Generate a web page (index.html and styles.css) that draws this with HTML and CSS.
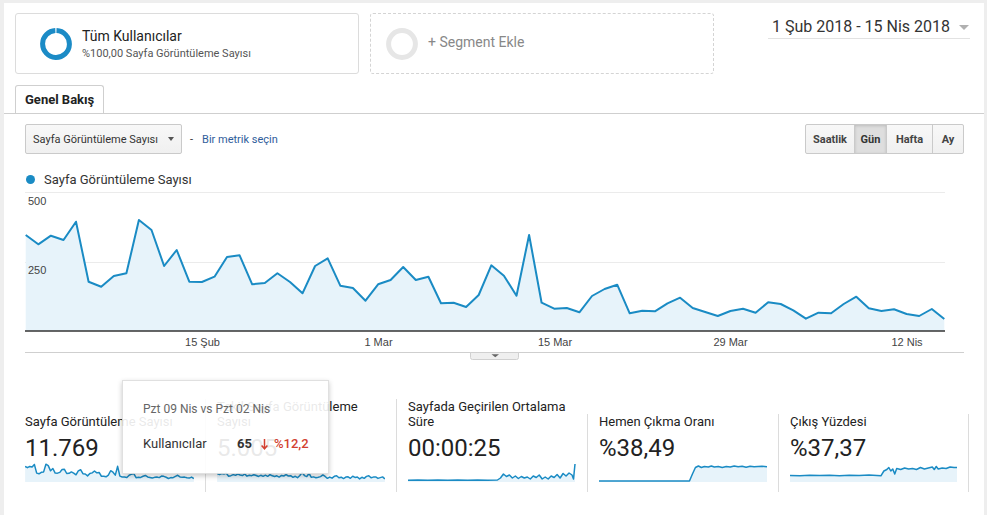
FILE: index.html
```html
<!DOCTYPE html>
<html lang="tr">
<head>
<meta charset="utf-8">
<title>Genel Bakış</title>
<link rel="stylesheet" href="styles.css">
</head>
<body>
<div class="panel">
  <div class="segments">
    <div class="seg-card">
      <svg class="ring" width="32" height="32" viewBox="0 0 32 32"><circle cx="16" cy="16" r="13.4" fill="none" stroke="#1b8bc6" stroke-width="5" stroke-dasharray="82.5 1.7" transform="rotate(-88 16 16)"/></svg>
      <div class="seg-text">
        <div class="seg-title">Tüm Kullanıcılar</div>
        <div class="seg-sub">%100,00 Sayfa Görüntüleme Sayısı</div>
      </div>
    </div>
    <div class="seg-card seg-add">
      <svg class="ring" width="32" height="32" viewBox="0 0 32 32"><circle cx="16" cy="16" r="13.4" fill="none" stroke="#e6e6e6" stroke-width="5"/></svg>
      <div class="seg-add-text">+ Segment Ekle</div>
    </div>
    <div class="date-range">
      <span>1 Şub 2018 - 15 Nis 2018</span>
      <span class="date-caret"></span>
    </div>
  </div>

  <div class="tabs">
    <div class="tab">Genel Bakış</div>
  </div>

  <div class="controls">
    <div class="metric-select">
      <span>Sayfa Görüntüleme Sayısı</span>
      <span class="select-caret"></span>
    </div>
    <span class="dash">-</span>
    <a class="link">Bir metrik seçin</a>
    <div class="btn-group">
      <div class="btn">Saatlik</div>
      <div class="btn active">Gün</div>
      <div class="btn">Hafta</div>
      <div class="btn">Ay</div>
    </div>
  </div>

  <div class="legend"><span class="legend-dot"></span><span>Sayfa Görüntüleme Sayısı</span></div>

  <svg class="chart" width="939" height="173" viewBox="25 187 939 173">
    <line x1="25" y1="192.5" x2="945" y2="192.5" stroke="#ebebeb" stroke-width="1"/>
    <line x1="25" y1="262.5" x2="945" y2="262.5" stroke="#ebebeb" stroke-width="1"/>
    <polygon fill="#e7f3fa" points="25.7,235 38.3,244.3 50.9,235.7 63.5,240 76,221.7 88.6,281.7 101.2,286.7 113.8,276 126.4,273.3 138.9,220 151.5,230 164.1,266 176.7,250 189.3,281.7 201.9,282 214.5,276.7 227,257 239.6,255.3 252.2,284.3 264.8,283 277.4,273.3 290,282 302.5,293.3 315.1,266 327.7,258.3 340.3,285.7 352.9,288 365.5,300.7 378.1,284.3 390.6,280 403.2,267 415.8,280 428.4,276.7 441,303.3 453.6,302.7 466.1,307 478.7,295 491.3,265.3 503.9,275.7 516.5,295.7 529.1,235 541.6,302.7 554.2,308.7 566.8,308 579.4,312.3 592,296 604.6,289 617.2,284.7 629.7,313.3 642.3,310.7 654.9,311.3 667.5,303.3 680.1,297.7 692.7,308 705.2,312 717.8,316 730.4,311 743,308.7 755.6,312.7 768.2,302.3 780.7,304 793.3,310.3 805.9,318.7 818.5,312.7 831.1,313.3 843.7,304 856.3,296.7 868.8,308.3 881.4,311 894,309.3 906.6,314 919.2,316 931.8,309 944.3,319 944.3,331 25.7,331"/>
    <polyline fill="none" stroke="#1a8bc4" stroke-width="2" stroke-linejoin="round" points="25.7,235 38.3,244.3 50.9,235.7 63.5,240 76,221.7 88.6,281.7 101.2,286.7 113.8,276 126.4,273.3 138.9,220 151.5,230 164.1,266 176.7,250 189.3,281.7 201.9,282 214.5,276.7 227,257 239.6,255.3 252.2,284.3 264.8,283 277.4,273.3 290,282 302.5,293.3 315.1,266 327.7,258.3 340.3,285.7 352.9,288 365.5,300.7 378.1,284.3 390.6,280 403.2,267 415.8,280 428.4,276.7 441,303.3 453.6,302.7 466.1,307 478.7,295 491.3,265.3 503.9,275.7 516.5,295.7 529.1,235 541.6,302.7 554.2,308.7 566.8,308 579.4,312.3 592,296 604.6,289 617.2,284.7 629.7,313.3 642.3,310.7 654.9,311.3 667.5,303.3 680.1,297.7 692.7,308 705.2,312 717.8,316 730.4,311 743,308.7 755.6,312.7 768.2,302.3 780.7,304 793.3,310.3 805.9,318.7 818.5,312.7 831.1,313.3 843.7,304 856.3,296.7 868.8,308.3 881.4,311 894,309.3 906.6,314 919.2,316 931.8,309 944.3,319"/>
    <line x1="25" y1="331" x2="945" y2="331" stroke="#333" stroke-width="1.3"/>
    <text class="axis" x="28" y="205">500</text>
    <text class="axis" x="28" y="274">250</text>
    <text class="axis" x="202.5" y="346" text-anchor="middle">15 Şub</text>
    <text class="axis" x="378.5" y="346" text-anchor="middle">1 Mar</text>
    <text class="axis" x="555" y="346" text-anchor="middle">15 Mar</text>
    <text class="axis" x="730.5" y="346" text-anchor="middle">29 Mar</text>
    <text class="axis" x="907" y="346" text-anchor="middle">12 Nis</text>
    <line x1="25" y1="352.5" x2="964" y2="352.5" stroke="#cfcfcf" stroke-width="1"/>
    <path d="M470.5 352.5 H518.5 V357.5 Q518.5 359.5 516.5 359.5 H472.5 Q470.5 359.5 470.5 357.5 Z" fill="#efefef" stroke="#d0d0d0" stroke-width="1"/>
    <polygon points="491.5,354.3 499,354.3 495.25,357.2" fill="#666"/>
  </svg>

  <div class="metrics">
    <div class="metric">
      <div class="metric-title">Sayfa Görüntüleme Sayısı</div>
      <div class="metric-value">11.769</div>
      <svg class="spark" viewBox="25 205 920 138" preserveAspectRatio="none">
        <polygon fill="#e7f3fa" points="25.7,235 38.3,244.3 50.9,235.7 63.5,240 76,221.7 88.6,281.7 101.2,286.7 113.8,276 126.4,273.3 138.9,220 151.5,230 164.1,266 176.7,250 189.3,281.7 201.9,282 214.5,276.7 227,257 239.6,255.3 252.2,284.3 264.8,283 277.4,273.3 290,282 302.5,293.3 315.1,266 327.7,258.3 340.3,285.7 352.9,288 365.5,300.7 378.1,284.3 390.6,280 403.2,267 415.8,280 428.4,276.7 441,303.3 453.6,302.7 466.1,307 478.7,295 491.3,265.3 503.9,275.7 516.5,295.7 529.1,235 541.6,302.7 554.2,308.7 566.8,308 579.4,312.3 592,296 604.6,289 617.2,284.7 629.7,313.3 642.3,310.7 654.9,311.3 667.5,303.3 680.1,297.7 692.7,308 705.2,312 717.8,316 730.4,311 743,308.7 755.6,312.7 768.2,302.3 780.7,304 793.3,310.3 805.9,318.7 818.5,312.7 831.1,313.3 843.7,304 856.3,296.7 868.8,308.3 881.4,311 894,309.3 906.6,314 919.2,316 931.8,309 944.3,319 944.3,343 25.7,343"/>
        <polyline class="spark-line" points="25.7,235 38.3,244.3 50.9,235.7 63.5,240 76,221.7 88.6,281.7 101.2,286.7 113.8,276 126.4,273.3 138.9,220 151.5,230 164.1,266 176.7,250 189.3,281.7 201.9,282 214.5,276.7 227,257 239.6,255.3 252.2,284.3 264.8,283 277.4,273.3 290,282 302.5,293.3 315.1,266 327.7,258.3 340.3,285.7 352.9,288 365.5,300.7 378.1,284.3 390.6,280 403.2,267 415.8,280 428.4,276.7 441,303.3 453.6,302.7 466.1,307 478.7,295 491.3,265.3 503.9,275.7 516.5,295.7 529.1,235 541.6,302.7 554.2,308.7 566.8,308 579.4,312.3 592,296 604.6,289 617.2,284.7 629.7,313.3 642.3,310.7 654.9,311.3 667.5,303.3 680.1,297.7 692.7,308 705.2,312 717.8,316 730.4,311 743,308.7 755.6,312.7 768.2,302.3 780.7,304 793.3,310.3 805.9,318.7 818.5,312.7 831.1,313.3 843.7,304 856.3,296.7 868.8,308.3 881.4,311 894,309.3 906.6,314 919.2,316 931.8,309 944.3,319"/>
      </svg>
    </div>
    <div class="metric">
      <div class="metric-title">Tekil Sayfa Görüntüleme Sayısı</div>
      <div class="metric-value">5.005</div>
      <svg class="spark" viewBox="25 150 920 200" preserveAspectRatio="none">
        <polygon fill="#e7f3fa" points="25.7,235 38.3,244.3 50.9,235.7 63.5,240 76,221.7 88.6,281.7 101.2,286.7 113.8,276 126.4,273.3 138.9,220 151.5,230 164.1,266 176.7,250 189.3,281.7 201.9,282 214.5,276.7 227,257 239.6,255.3 252.2,284.3 264.8,283 277.4,273.3 290,282 302.5,293.3 315.1,266 327.7,258.3 340.3,285.7 352.9,288 365.5,300.7 378.1,284.3 390.6,280 403.2,267 415.8,280 428.4,276.7 441,303.3 453.6,302.7 466.1,307 478.7,295 491.3,265.3 503.9,275.7 516.5,295.7 529.1,235 541.6,302.7 554.2,308.7 566.8,308 579.4,312.3 592,296 604.6,289 617.2,284.7 629.7,313.3 642.3,310.7 654.9,311.3 667.5,303.3 680.1,297.7 692.7,308 705.2,312 717.8,316 730.4,311 743,308.7 755.6,312.7 768.2,302.3 780.7,304 793.3,310.3 805.9,318.7 818.5,312.7 831.1,313.3 843.7,304 856.3,296.7 868.8,308.3 881.4,311 894,309.3 906.6,314 919.2,316 931.8,309 944.3,319 944.3,350 25.7,350"/>
        <polyline class="spark-line" points="25.7,265 38.3,274.3 50.9,265.7 63.5,270 76,261.7 88.6,291.7 101.2,286.7 113.8,276 126.4,283.3 138.9,270 151.5,280 164.1,286 176.7,270 189.3,291.7 201.9,282 214.5,286.7 227,277 239.6,285.3 252.2,294.3 264.8,283 277.4,293.3 290,282 302.5,293.3 315.1,276 327.7,288.3 340.3,295.7 352.9,288 365.5,300.7 378.1,284.3 390.6,290 403.2,277 415.8,290 428.4,286.7 441,303.3 453.6,292.7 466.1,307 478.7,285 491.3,255.3 503.9,285.7 516.5,295.7 529.1,265 541.6,302.7 554.2,298.7 566.8,308 579.4,302.3 592,296 604.6,279 617.2,294.7 629.7,313.3 642.3,300.7 654.9,311.3 667.5,293.3 680.1,287.7 692.7,308 705.2,302 717.8,316 730.4,301 743,298.7 755.6,312.7 768.2,292.3 780.7,304 793.3,300.3 805.9,318.7 818.5,302.7 831.1,313.3 843.7,294 856.3,286.7 868.8,308.3 881.4,301 894,299.3 906.6,314 919.2,306 931.8,299 944.3,319"/>
      </svg>
    </div>
    <div class="metric">
      <div class="metric-title">Sayfada Geçirilen Ortalama Süre</div>
      <div class="metric-value">00:00:25</div>
      <svg class="spark" viewBox="0 0 169 20" preserveAspectRatio="none">
        <polygon fill="#e7f3fa" points="0,18.2 10,18 20,18.3 30,18 40,18.2 50,18 60,18.3 70,18.1 80,18.2 90,18 93,16 96,12 99,14.5 102,13 105,16 108,14 111,16.5 114,14.5 117,16 120,15 123,17 126,14 129,15.5 132,13 135,17 138,15 141,17 144,14 147,15.5 150,12.5 153,16 156,11.5 159,14 162,11 165,13 166.5,17 168,2 168,20 0,20"/>
        <polyline class="spark-line" points="0,18.2 10,18 20,18.3 30,18 40,18.2 50,18 60,18.3 70,18.1 80,18.2 90,18 93,16 96,12 99,14.5 102,13 105,16 108,14 111,16.5 114,14.5 117,16 120,15 123,17 126,14 129,15.5 132,13 135,17 138,15 141,17 144,14 147,15.5 150,12.5 153,16 156,11.5 159,14 162,11 165,13 166.5,17 168,2"/>
      </svg>
    </div>
    <div class="metric">
      <div class="metric-title">Hemen Çıkma Oranı</div>
      <div class="metric-value">%38,49</div>
      <svg class="spark" viewBox="0 0 169 20" preserveAspectRatio="none">
        <polygon fill="#e7f3fa" points="0,19 30,19 60,19 91,19 94,12 97,5.5 100,4 103,5.5 106,4.5 110,5 113,4 116,5 120,4.5 124,5.5 128,4.5 132,5 136,4 140,4.8 144,4.2 148,5.2 152,4.3 156,4.8 160,4.5 164,4.2 169,4.8 169,20 0,20"/>
        <polyline class="spark-line" points="0,19 30,19 60,19 91,19 94,12 97,5.5 100,4 103,5.5 106,4.5 110,5 113,4 116,5 120,4.5 124,5.5 128,4.5 132,5 136,4 140,4.8 144,4.2 148,5.2 152,4.3 156,4.8 160,4.5 164,4.2 169,4.8"/>
      </svg>
    </div>
    <div class="metric">
      <div class="metric-title">Çıkış Yüzdesi</div>
      <div class="metric-value">%37,37</div>
      <svg class="spark" viewBox="0 0 169 20" preserveAspectRatio="none">
        <polygon fill="#e7f3fa" points="0,13.5 10,13.8 20,13.2 30,13.6 40,13.3 50,13.7 60,13.2 70,13.6 80,13.1 88,13.4 92,13.8 95,9 98,7.5 100,5.5 102,9 104,7 106,12 108,6.5 112,7.5 116,6 120,7 124,6.5 128,7.5 132,5.5 136,7 140,6 144,5 146,7.5 148,4.5 150,7 154,6 158,6.5 162,5 166,5.5 169,5.5 169,20 0,20"/>
        <polyline class="spark-line" points="0,13.5 10,13.8 20,13.2 30,13.6 40,13.3 50,13.7 60,13.2 70,13.6 80,13.1 88,13.4 92,13.8 95,9 98,7.5 100,5.5 102,9 104,7 106,12 108,6.5 112,7.5 116,6 120,7 124,6.5 128,7.5 132,5.5 136,7 140,6 144,5 146,7.5 148,4.5 150,7 154,6 158,6.5 162,5 166,5.5 169,5.5"/>
      </svg>
    </div>

    <div class="tooltip">
      <div class="tip-date">Pzt 09 Nis vs Pzt 02 Nis</div>
      <div class="tip-row">
        <span class="tip-label">Kullanıcılar</span>
        <span class="tip-num">65</span>
        <span class="tip-change"><svg width="7" height="11" viewBox="0 0 7 11"><path d="M3.5 0 V9.5 M0.6 6.6 L3.5 9.8 L6.4 6.6" fill="none" stroke="#d23f31" stroke-width="1.5"/></svg>%12,2</span>
      </div>
    </div>
  </div>
</div>
</body>
</html>
```

FILE: styles.css
```css
html, body {
  margin: 0;
  padding: 0;
}
body {
  background: #eeeeee;
  font-family: Roboto, "Liberation Sans", Arial, sans-serif;
  color: #333;
}
.panel {
  margin: 3px 0 0 4px;
  width: 980px;
  height: 512px;
  background: #fff;
  padding-top: 10px;
  box-sizing: border-box;
}

/* segments */
.segments {
  display: flex;
  align-items: flex-start;
  padding: 0 14px 0 11px;
}
.seg-card {
  width: 344px;
  height: 61px;
  box-sizing: border-box;
  border: 1px solid #dcdcdc;
  border-radius: 3px;
  display: flex;
  align-items: center;
  padding-left: 24px;
}
.ring {
  display: block;
  flex: none;
}
.seg-text {
  margin-left: 10px;
  margin-top: 1px;
}
.seg-title {
  font-size: 14px;
  line-height: 17px;
  color: #222;
}
.seg-sub {
  font-size: 11px;
  line-height: 15px;
  color: #555;
  margin-top: 1px;
}
.seg-add {
  margin-left: 11px;
  border: 1px dashed #d4d4d4;
  padding-left: 15px;
}
.seg-add-text {
  margin-left: 10px;
  margin-bottom: 3px;
  font-size: 14px;
  color: #888;
}
.date-range {
  margin-left: auto;
  width: 202px;
  box-sizing: border-box;
  display: flex;
  align-items: center;
  padding: 4px 0 1px 4px;
  line-height: 20px;
  font-size: 16px;
  color: #333;
  border-bottom: 1px solid #e2e2e2;
}
.date-caret {
  margin-left: auto;
  margin-right: 1px;
  width: 0;
  height: 0;
  border-left: 5px solid transparent;
  border-right: 5px solid transparent;
  border-top: 5px solid #b0b0b0;
}

/* tabs */
.tabs {
  margin-top: 11px;
  padding-left: 11px;
  border-bottom: 1px solid #cfcfcf;
  display: flex;
}
.tab {
  height: 28px;
  box-sizing: border-box;
  padding: 0 9px 0 9px;
  border: 1px solid #cfcfcf;
  border-bottom: none;
  border-radius: 3px 3px 0 0;
  font-size: 13px;
  font-weight: bold;
  color: #222;
  line-height: 28px;
  background: #fff;
}

/* controls */
.controls {
  margin-top: 10px;
  padding: 0 20px 0 21px;
  height: 30px;
  display: flex;
  align-items: center;
}
.metric-select {
  width: 157px;
  height: 30px;
  box-sizing: border-box;
  border: 1px solid #cacaca;
  border-radius: 2px;
  background: linear-gradient(#f8f8f8, #f0f0f0);
  display: flex;
  align-items: center;
  padding-left: 7px;
  font-size: 11px;
  color: #333;
}
.select-caret {
  margin-left: auto;
  margin-right: 7px;
  width: 0;
  height: 0;
  border-left: 3px solid transparent;
  border-right: 3px solid transparent;
  border-top: 4px solid #555;
}
.dash {
  margin-left: 8px;
  font-size: 11px;
  color: #333;
}
.link {
  margin-left: 9px;
  font-size: 11px;
  color: #2f5d9b;
  cursor: pointer;
}
.btn-group {
  margin-left: auto;
  display: grid;
  grid-template-columns: 48px 32px 46px 31px;
  height: 30px;
  box-sizing: border-box;
  border: 1px solid #cacaca;
  border-radius: 2px;
  background: linear-gradient(#f8f8f8, #f0f0f0);
}
.btn {
  display: flex;
  align-items: center;
  justify-content: center;
  font-size: 11px;
  font-weight: bold;
  color: #444;
  border-left: 1px solid #cacaca;
}
.btn:first-child {
  border-left: none;
}
.btn.active {
  background: #dedede;
  box-shadow: inset 0 1px 3px rgba(0, 0, 0, 0.15);
  color: #333;
}

/* legend + chart */
.legend {
  margin-top: 17px;
  padding-left: 22px;
  height: 16px;
  display: flex;
  align-items: center;
  font-size: 13px;
  color: #333;
}
.legend-dot {
  width: 9px;
  height: 9px;
  border-radius: 50%;
  background: #1a8bc4;
  margin-right: 9px;
}
.chart {
  display: block;
  margin-left: 21px;
}
.axis {
  font-family: "Liberation Sans", Arial, sans-serif;
  font-size: 11px;
  fill: #444;
}

/* metrics */
.metrics {
  position: relative;
  margin-top: 39px;
  padding-left: 10px;
  display: flex;
  align-items: flex-end;
}
.metric {
  width: 191px;
  box-sizing: border-box;
  padding: 0 11px 10px;
  border-left: 1px solid #dcdcdc;
}
.metric:first-child {
  border-left: none;
}
.metric:nth-child(5) {
  border-right: 1px solid #dcdcdc;
}
.metric-title {
  font-size: 13px;
  line-height: 15px;
  color: #222;
}
.metric-value {
  margin-top: 5px;
  font-size: 24px;
  line-height: 28px;
  color: #222;
}
.spark {
  display: block;
  width: 100%;
  height: 20px;
}
.spark-line {
  fill: none;
  stroke: #1a8bc4;
  stroke-width: 1.5;
  stroke-linejoin: round;
  vector-effect: non-scaling-stroke;
}

/* tooltip */
.tooltip {
  position: absolute;
  left: 118px;
  top: -19px;
  width: 207px;
  box-sizing: border-box;
  padding: 20px 10px 20px 20px;
  background: rgba(255, 255, 255, 0.9);
  border: 1px solid rgba(0, 0, 0, 0.12);
  box-shadow: 0 2px 5px rgba(0, 0, 0, 0.22);
}
.tip-date {
  font-size: 12px;
  line-height: 16px;
  color: #666;
}
.tip-row {
  margin-top: 18px;
  display: flex;
  align-items: center;
  font-size: 13px;
  line-height: 18px;
}
.tip-label {
  width: 94px;
  color: #333;
}
.tip-num {
  font-weight: bold;
  color: #333;
}
.tip-change {
  margin-left: 9px;
  display: flex;
  align-items: center;
  gap: 6px;
  color: #d23f31;
  font-weight: 500;
}
.tip-change svg {
  display: block;
}
```
